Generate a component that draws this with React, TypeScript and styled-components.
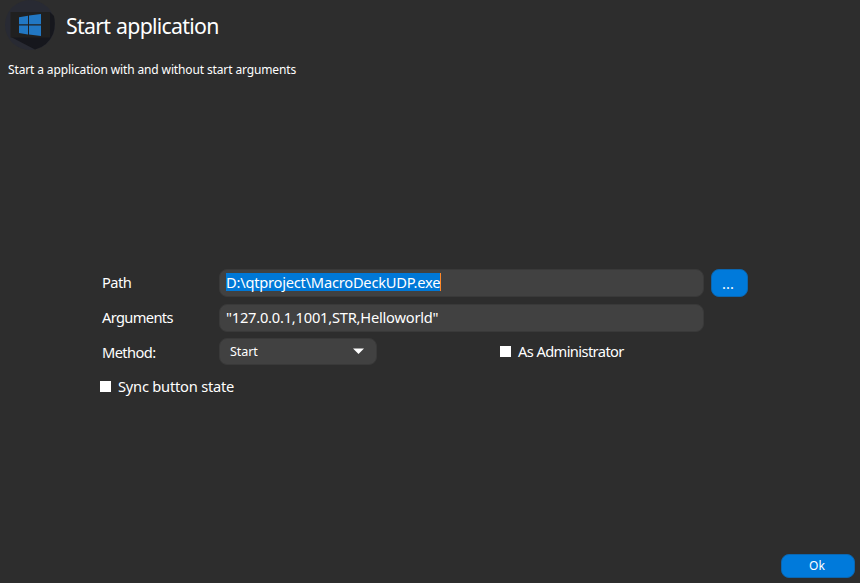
import React from "react";
import styled, { createGlobalStyle } from "styled-components";

const GlobalStyle = createGlobalStyle`
  * { box-sizing: border-box; }
  body { margin: 0; background: #2d2d2d; }
`;

const Window = styled.main`
  display: flex;
  flex-direction: column;
  width: 860px;
  height: 583px;
  overflow: hidden;
  background: #2d2d2d;
  color: #fff;
  font-family: "Noto Sans", "Open Sans", sans-serif;
`;

const Header = styled.header`
  display: flex;
  height: 52px;
  padding-left: 5px;
  gap: 11px;
`;

const Logo = styled.svg`
  flex: none;
  width: 50px;
  height: 50px;
`;

const Title = styled.h1`
  margin: 0;
  font-size: 21.3px;
  font-weight: 400;
  letter-spacing: -0.72px;
  word-spacing: 1px;
  line-height: 52px;
  white-space: nowrap;
`;

const Description = styled.p`
  margin: 9px 0 0 8px;
  font-size: 12px;
  letter-spacing: -0.13px;
  line-height: 18px;
  white-space: nowrap;
`;

const Form = styled.form`
  margin: 190px 0 0 99px;
  display: flex;
  flex-direction: column;
`;

const Row = styled.div<{ $height: number; $gap: number }>`
  display: flex;
  align-items: center;
  height: ${(p) => p.$height}px;
  margin-bottom: ${(p) => p.$gap}px;
`;

const Label = styled.label<{ $lift?: number }>`
  flex: none;
  width: 120px;
  padding: 0 0 ${(p) => p.$lift ?? 0}px 3px;
  font-size: 15px;
  line-height: 20px;
`;

const Text = styled.span<{ $spacing?: number; $size?: number; $lift?: number }>`
  padding-bottom: ${(p) => p.$lift ?? 0}px;
  font-size: ${(p) => p.$size ?? 14.67}px;
  letter-spacing: ${(p) => p.$spacing ?? 0}px;
  white-space: nowrap;
`;

const Field = styled.div`
  display: flex;
  align-items: center;
  width: 485px;
  height: 28px;
  padding: 0 0 2px 6px;
  border: 0.5px solid #393939;
  border-radius: 8px;
  background: #414141;
`;

const Selection = styled.span`
  display: flex;
  align-items: center;
  width: 215px;
  height: 18px;
  border-right: 1px solid #ff8728;
  background: #0078d7;
`;

const Button = styled.button`
  display: flex;
  align-items: center;
  justify-content: center;
  border: 1px solid #0b66b0;
  border-radius: 8px;
  background: #007adb;
  color: #fff;
  font-family: inherit;
`;

const BrowseButton = styled(Button)`
  width: 37px;
  height: 28px;
  margin-left: 7px;
  padding: 0 3px 0 0;
`;

const OkButton = styled(Button)`
  width: 74px;
  height: 24px;
  padding: 0 2px 2px 0;
`;

const Select = styled.div`
  display: flex;
  align-items: center;
  justify-content: space-between;
  width: 158px;
  height: 27px;
  padding: 0 12px 1px 10px;
  border: 0.5px solid #393939;
  border-radius: 8px;
  background: #414141;
`;

const CheckOption = styled.label<{ $offset?: number }>`
  display: flex;
  align-items: center;
  gap: 7px;
  margin-left: ${(p) => p.$offset ?? 0}px;
`;

const CheckBox = styled.span`
  width: 11px;
  height: 11px;
  background: #fff;
`;

const Footer = styled.footer`
  display: flex;
  justify-content: flex-end;
  margin-top: auto;
  padding: 0 5px 5px 0;
`;

export default function App() {
  return (
    <>
      <GlobalStyle />
      <Window>
        <Header>
          <Logo viewBox="0 0 50 50">
            <circle cx="25" cy="25" r="25" fill="#282a33" />
            <path d="M45 12L49 16Q51 26 48 34Q43 46 30 49.6L6 37Z" fill="#16171d" />
            <path d="M5.5 12H45V37.5H5.5Z" fill="#202020" />
            <path d="M14 17.3L23 15.8V24.3H14ZM24 15.6L36 14V24.3H24ZM14 25.6H23V34.4L14 33ZM24 25.6H36V36L24 34.5Z" fill="#2278c4" />
          </Logo>
          <Title>Start application</Title>
        </Header>
        <Description>Start a application with and without start arguments</Description>
        <Form>
          <Row $height={28} $gap={7}>
            <Label $lift={2}><Text $spacing={-0.55}>Path</Text></Label>
            <Field><Selection><Text $spacing={-0.23}>D:\qtproject\MacroDeckUDP.exe</Text></Selection></Field>
            <BrowseButton type="button"><Text $size={14.67}>...</Text></BrowseButton>
          </Row>
          <Row $height={28} $gap={6}>
            <Label $lift={2}><Text $spacing={-0.65}>Arguments</Text></Label>
            <Field><Text $spacing={-0.22}>"127.0.0.1,1001,STR,Helloworld"</Text></Field>
          </Row>
          <Row $height={27} $gap={10}>
            <Label><Text $spacing={-0.6}>Method:</Text></Label>
            <Select>
              <Text $size={12.6} $spacing={-0.1}>Start</Text>
              <svg width="11" height="6" viewBox="0 0 11 6"><path d="M0 .5H11L5.5 6Z" fill="#fff" /></svg>
            </Select>
            <CheckOption $offset={123}><CheckBox /><Text $spacing={-0.6} $lift={2}>As Administrator</Text></CheckOption>
          </Row>
          <Row $height={22} $gap={0}>
            <CheckOption $offset={1}><CheckBox /><Text $spacing={-0.22}>Sync button state</Text></CheckOption>
          </Row>
        </Form>
        <Footer><OkButton type="button"><Text $size={12}>Ok</Text></OkButton></Footer>
      </Window>
    </>
  );
}
